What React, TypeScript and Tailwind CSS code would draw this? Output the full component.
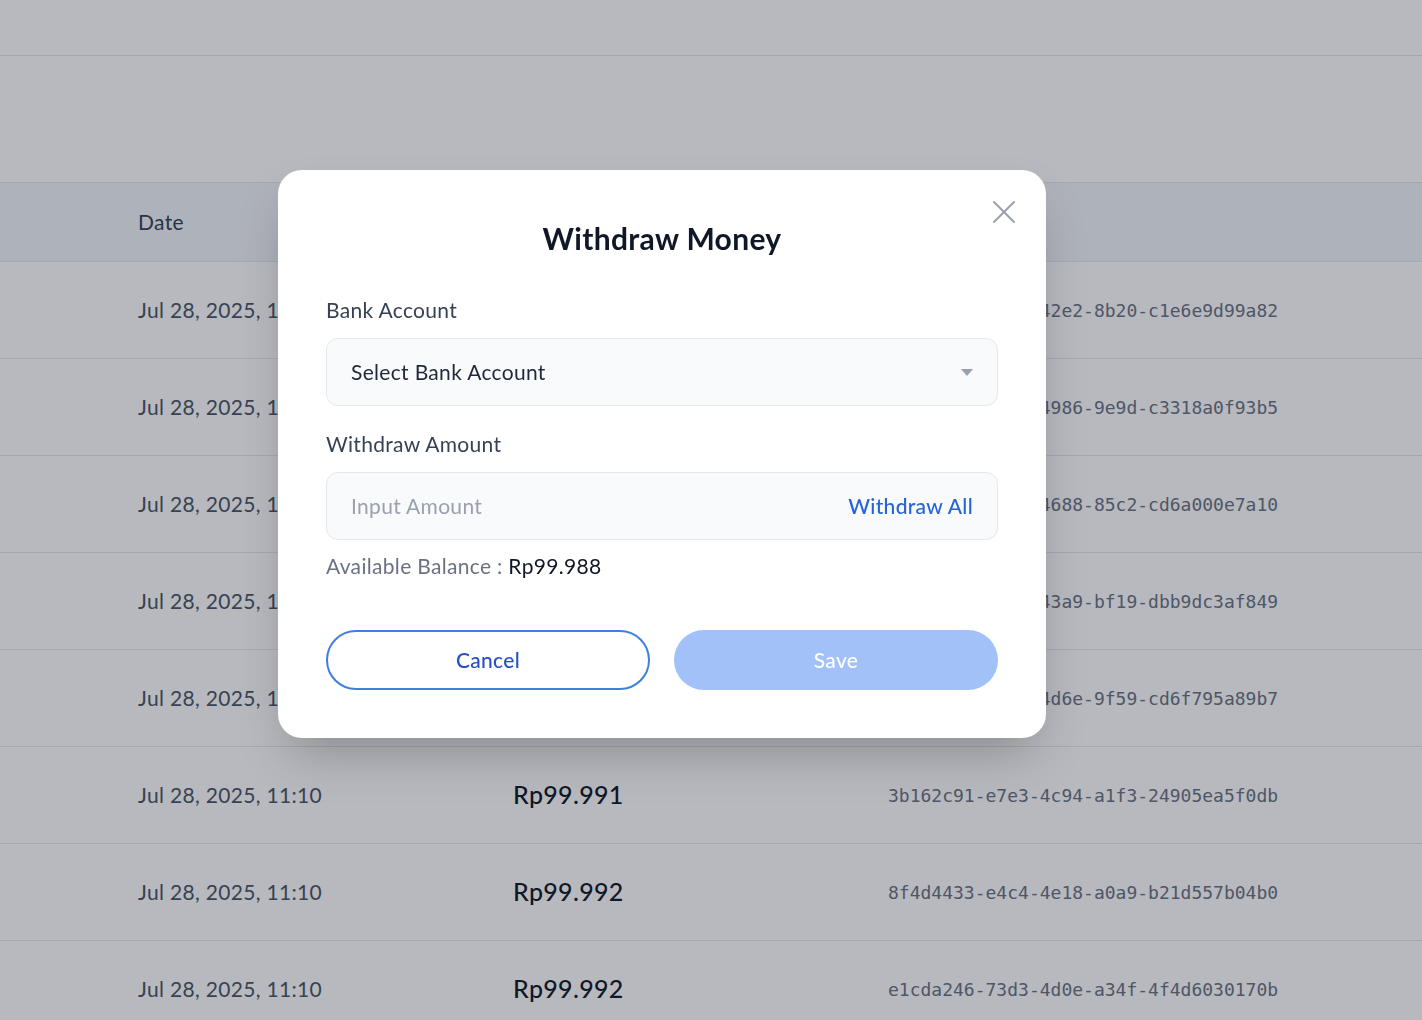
import { useState } from "react";

const rows = [
    { date: "Jul 28, 2025, 11:10", amount: "Rp99.980", id: "5d7a10b3-9c4e-42e2-8b20-c1e6e9d99a82" },
    { date: "Jul 28, 2025, 11:10", amount: "Rp99.982", id: "a3e91f07-51bc-4986-9e9d-c3318a0f93b5" },
    { date: "Jul 28, 2025, 11:10", amount: "Rp99.984", id: "0c6d2e8f-7a14-4688-85c2-cd6a000e7a10" },
    { date: "Jul 28, 2025, 11:10", amount: "Rp99.986", id: "e27b54c1-0f6d-43a9-bf19-dbb9dc3af849" },
    { date: "Jul 28, 2025, 11:10", amount: "Rp99.988", id: "91f3c6a2-b8e0-4d6e-9f59-cd6f795a89b7" },
    { date: "Jul 28, 2025, 11:10", amount: "Rp99.991", id: "3b162c91-e7e3-4c94-a1f3-24905ea5f0db" },
    { date: "Jul 28, 2025, 11:10", amount: "Rp99.992", id: "8f4d4433-e4c4-4e18-a0a9-b21d557b04b0" },
    { date: "Jul 28, 2025, 11:10", amount: "Rp99.992", id: "e1cda246-73d3-4d0e-a34f-4f4d6030170b" },
];

const font = "font-['Lato','Noto_Sans',sans-serif] tracking-[0.02em]";

function TransactionTable() {
    return (
        <div className="w-full">
            <div className="grid grid-cols-[375px_375px_1fr] px-[138px] h-[80px] items-center bg-[#f3f5f9] border-y border-gray-200 text-[21px] text-gray-700">
                <div>Date</div>
                <div>Amount</div>
                <div>Transaction ID</div>
            </div>
            {rows.map((row, i) => (
                <div
                    key={i}
                    className="grid grid-cols-[375px_375px_1fr] px-[138px] h-[97px] items-center border-b border-gray-200"
                >
                    <div className="text-[21px] text-gray-600">{row.date}</div>
                    <div className="text-[25px] text-gray-900 font-medium">{row.amount}</div>
                    <div className="text-[18px] tracking-normal text-gray-500 font-['DejaVu_Sans_Mono',monospace]">{row.id}</div>
                </div>
            ))}
        </div>
    );
}

function WithdrawModal() {
    const [amount, setAmount] = useState("");

    return (
        <div className="fixed inset-0 bg-gray-900/30 flex justify-center items-start pt-[170px] pr-[98px]">
            <div className="relative w-[768px] bg-white rounded-[24px] shadow-2xl px-12 pt-[50px] pb-12">
                <button className="absolute right-[30px] top-[30px] w-[24px] h-[24px] text-gray-400">
                    <svg viewBox="0 0 24 24" width="24" height="24" fill="none" stroke="currentColor" strokeWidth="2" strokeLinecap="round">
                        <path d="M2 2L22 22M22 2L2 22" />
                    </svg>
                </button>

                <h2 className="text-center text-[30px] font-bold text-gray-900 leading-9 mb-[40px]">Withdraw Money</h2>

                <label className="block text-[21px] text-gray-700 leading-7 mb-[14px]">Bank Account</label>
                <div className="flex items-center justify-between h-[68px] px-6 bg-gray-50 border border-gray-200 rounded-xl">
                    <span className="text-[21px] text-gray-800">Select Bank Account</span>
                    <svg width="12" height="7" viewBox="0 0 12 7" className="text-gray-400">
                        <path d="M0 0H12L6 7Z" fill="currentColor" />
                    </svg>
                </div>

                <label className="block text-[21px] text-gray-700 leading-7 mt-[24px] mb-[14px]">Withdraw Amount</label>
                <div className="flex items-center justify-between h-[68px] px-6 bg-gray-50 border border-gray-200 rounded-xl">
                    <input
                        value={amount}
                        onChange={(e) => setAmount(e.target.value)}
                        placeholder="Input Amount"
                        className="flex-1 min-w-0 bg-transparent outline-none text-[21px] text-gray-800 placeholder:text-gray-400"
                    />
                    <button className="shrink-0 text-[21px] text-[#2563d9] font-medium">Withdraw All</button>
                </div>

                <p className="mt-[12px] text-[21px] leading-7 text-gray-500">
                    Available Balance : <span className="text-gray-900">Rp99.988</span>
                </p>

                <div className="grid grid-cols-2 gap-6 mt-[50px]">
                    <button className="h-[60px] rounded-full border-2 border-[#3f7fe0] text-[21px] text-[#2550c0] font-medium">
                        Cancel
                    </button>
                    <button disabled className="h-[60px] rounded-full bg-[#a2c1f8] text-[21px] text-white font-medium">
                        Save
                    </button>
                </div>
            </div>
        </div>
    );
}

export default function App() {
    return (
        <div className={`min-h-screen bg-white ${font}`}>
            <div className="h-[56px] border-b border-gray-200" />
            <div className="pt-[126px]">
                <TransactionTable />
            </div>
            <WithdrawModal />
        </div>
    );
}
